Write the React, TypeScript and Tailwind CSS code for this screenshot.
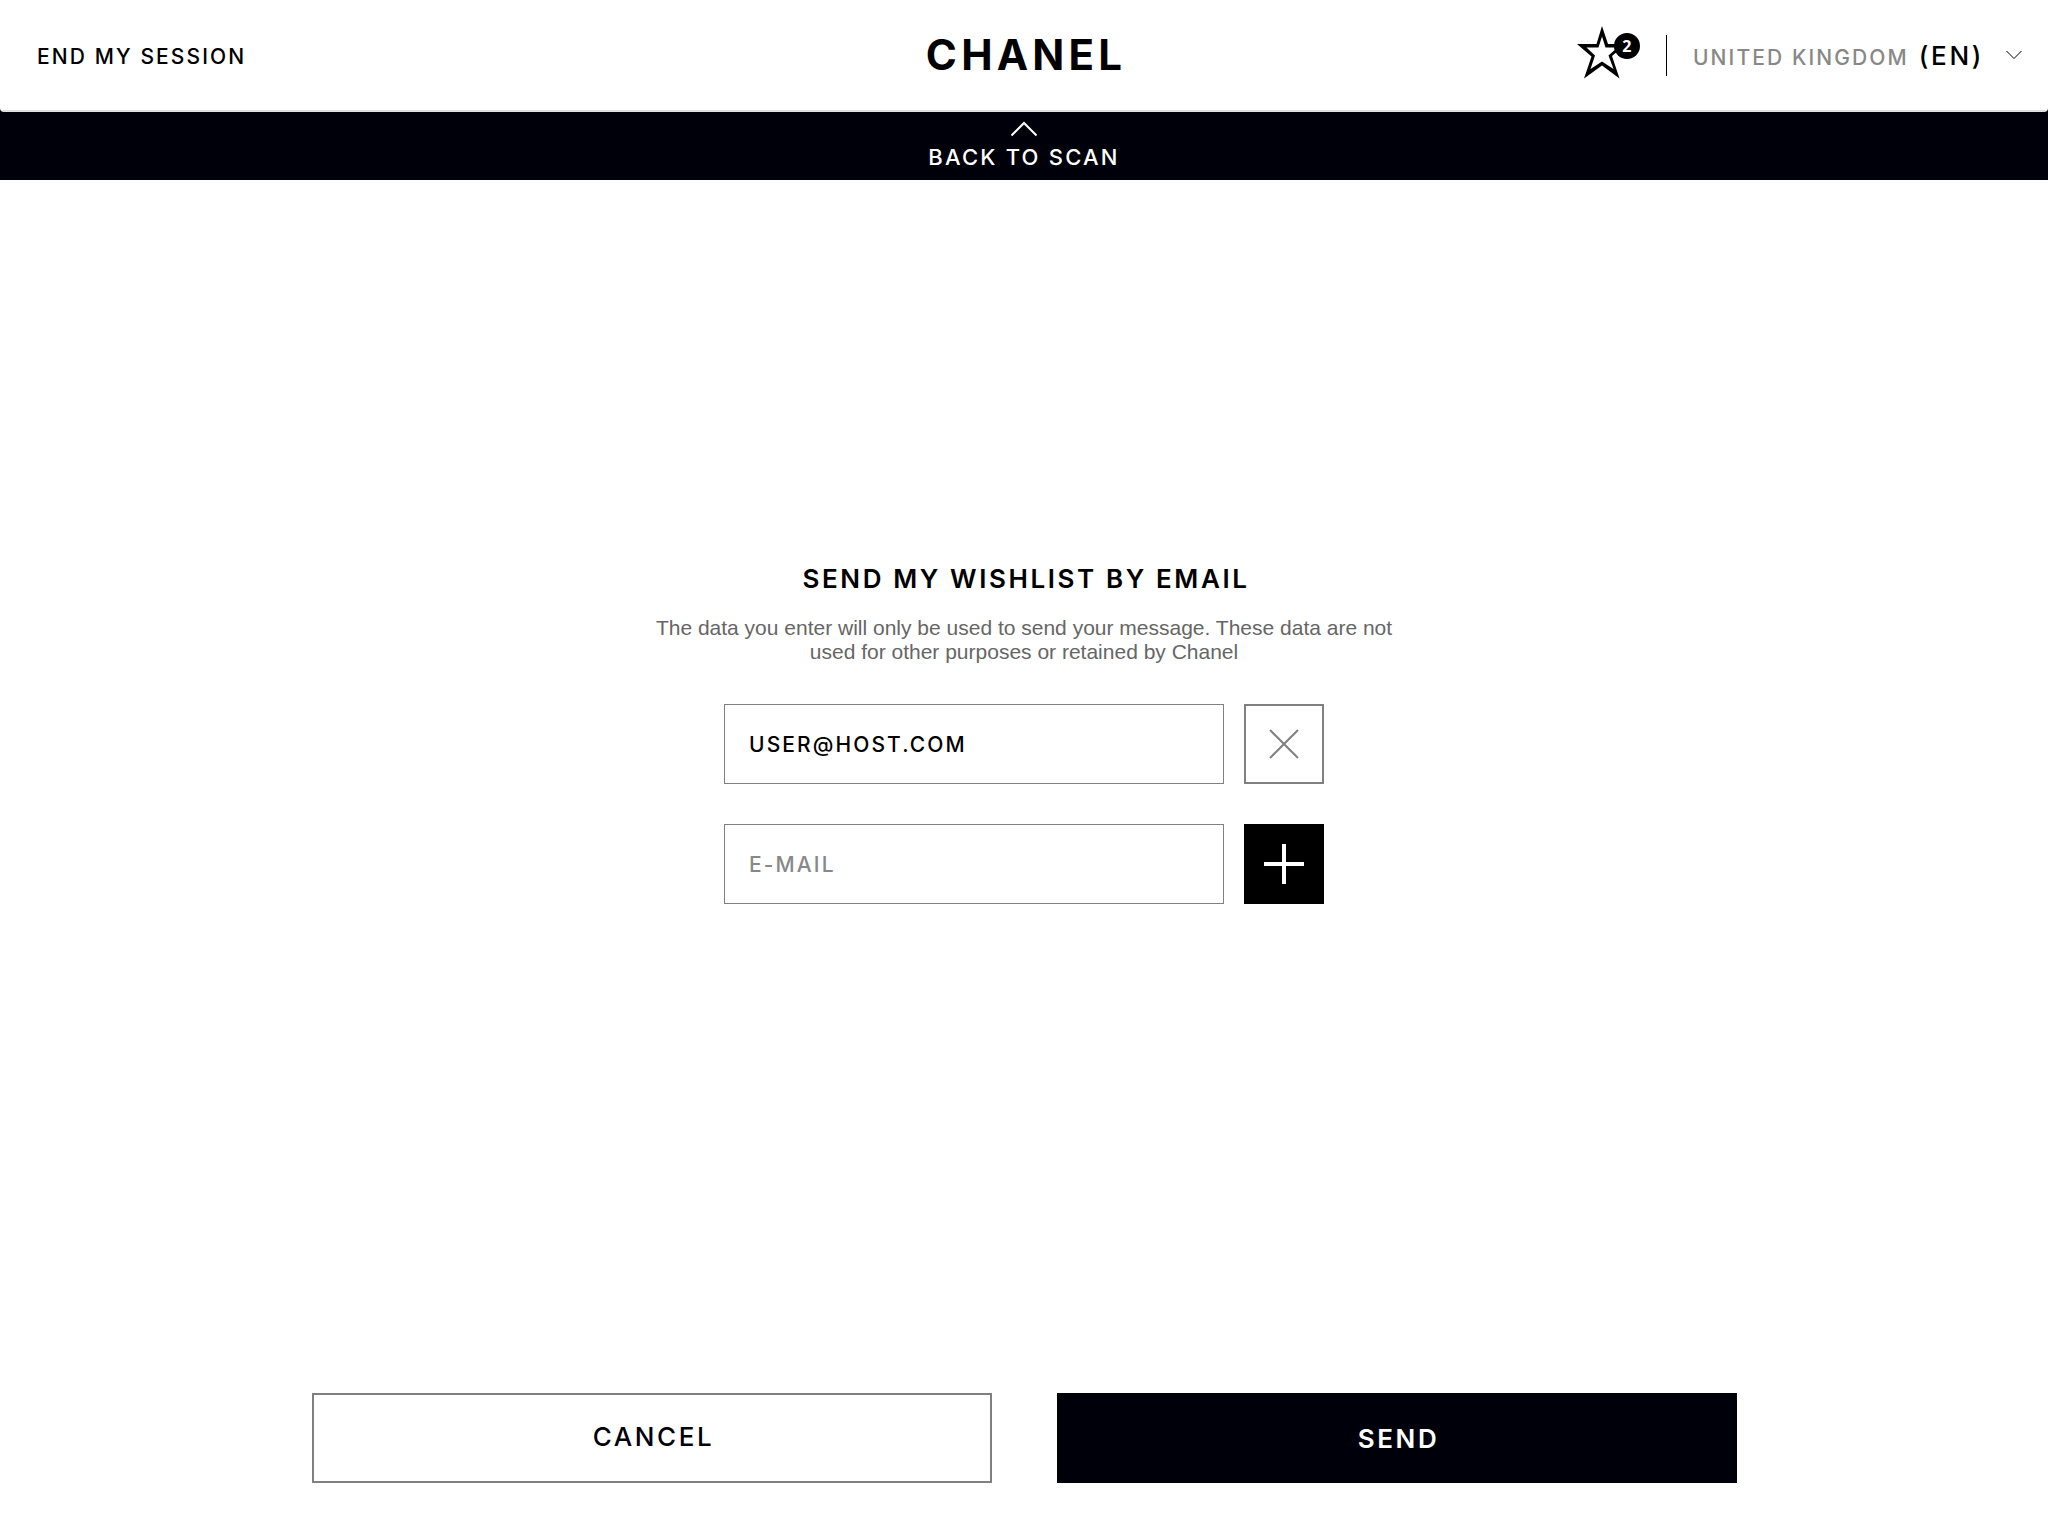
import { useState } from "react";

function Header() {
  return (
    <header className="grid h-28 grid-cols-[1fr_auto_1fr] items-center rounded-b-sm border-b-2 border-[#e0e0e0] bg-white">
      <button type="button" className="ml-9 justify-self-start pt-1 pl-px text-[21px] font-medium tracking-widest">
        END MY SESSION
      </button>
      <a href="#" className="pl-1 text-[42px] leading-none font-bold tracking-widest">
        CHANEL
      </a>
      <div className="mr-[26px] flex items-center justify-self-end">
        <button type="button" aria-label="Wishlist, 2 items" className="relative mb-1 h-[54px] w-[64px]">
          <svg viewBox="0 0 64 54" className="h-full w-full">
            <path
              fillRule="evenodd"
              d="M26 0 L32 18 H50 L36 30 L43.5 52.500 L26 39.500 L8 52.500 L15.5 30.500 L1 18 H20.500 Z M26 10.500 L22.500 21.500 H10.500 L19 29.500 L14.500 43 L26 35.500 L37.500 43 L32.500 29.500 L41.500 21.500 H29.500 Z"
            />
          </svg>
          <span className="absolute top-[7px] right-0 flex size-[26px] items-center justify-center rounded-full bg-black font-['Open_Sans'] text-base leading-none font-bold text-white">
            2
          </span>
        </button>
        <span className="ml-[26px] h-[41px] w-px bg-black" />
        <div className="relative ml-[26px] flex items-center">
          <span aria-hidden="true" className="flex items-baseline gap-2.5 whitespace-nowrap">
            <span className="text-[21px] font-medium tracking-widest text-[#888]">UNITED KINGDOM</span>
            <span className="text-[26px] font-medium tracking-widest">(EN)</span>
          </span>
          <svg viewBox="0 0 16 10" className="ml-[22px] h-[10px] w-4" fill="none" stroke="#000" strokeWidth="1">
            <path d="M0.5 1 L8 8.5 L15.5 1" />
          </svg>
          <select aria-label="Country and language" className="absolute inset-0 h-full w-full cursor-pointer opacity-0">
            <option>UNITED KINGDOM (EN)</option>
          </select>
        </div>
      </div>
    </header>
  );
}

function EmailForm() {
  const [email, setEmail] = useState("USER@HOST.COM");
  const [next, setNext] = useState("");
  const field =
    "h-20 min-w-0 flex-1 border border-[#808080] bg-white px-6 text-[21px] font-medium tracking-widest outline-none placeholder:text-[#888]";
  return (
    <div className="flex w-full max-w-[600px] flex-col gap-10">
      <div className="flex gap-5">
        <input type="email" aria-label="Recipient e-mail" value={email} onChange={(e) => setEmail(e.target.value)} className={field} />
        <button type="button" aria-label="Remove e-mail" onClick={() => setEmail("")} className="flex size-20 items-center justify-center border-2 border-[#808080]">
          <svg viewBox="0 0 30 30" className="size-[30px]" stroke="#808080" strokeWidth="2">
            <path d="M1 1 L29 29 M29 1 L1 29" />
          </svg>
        </button>
      </div>
      <div className="flex gap-5">
        <input type="email" aria-label="Additional e-mail" placeholder="E-MAIL" value={next} onChange={(e) => setNext(e.target.value)} className={field} />
        <button type="button" aria-label="Add e-mail" className="flex size-20 items-center justify-center bg-black">
          <svg viewBox="0 0 40 40" className="size-10" stroke="#fff" strokeWidth="4">
            <path d="M20 0 V40 M0 20 H40" />
          </svg>
        </button>
      </div>
    </div>
  );
}

export default function App() {
  return (
    <div className="flex min-h-screen flex-col bg-white font-['Inter',sans-serif] text-black">
      <div className="bg-[#00000a]">
        <Header />
        <button type="button" className="flex h-[68px] w-full flex-col items-center gap-1 pt-[9px] text-[22px] leading-8 font-medium tracking-widest text-white">
          <svg viewBox="0 0 28 16" className="h-4 w-7 shrink-0" fill="none" stroke="#fff" strokeWidth="2">
            <path d="M1.5 14.5 L14 2 L26.5 14.5" />
          </svg>
          BACK TO SCAN
        </button>
      </div>
      <main className="flex flex-1 flex-col items-center px-6 pt-[383px]">
        <h1 className="pl-1 text-[26px] leading-8 font-semibold tracking-widest">SEND MY WISHLIST BY EMAIL</h1>
        <p className="mt-[21px] mb-10 max-w-[740px] text-center font-['Liberation_Sans',sans-serif] text-[21px] leading-6 text-[#666]">
          The data you enter will only be used to send your message. These data are not used for other purposes or retained by Chanel
        </p>
        <EmailForm />
      </main>
      <footer className="mx-auto grid w-full max-w-[1425px] grid-cols-2 gap-[65px] pt-10 pb-[53px]">
        <button type="button" className="h-[90px] border-2 border-[#808080] pb-1 pl-1 text-[26px] font-medium tracking-widest text-[#00000a]">
          CANCEL
        </button>
        <button type="button" className="h-[90px] bg-[#00000a] pl-1 text-[26px] font-semibold tracking-widest text-white">
          SEND
        </button>
      </footer>
    </div>
  );
}
